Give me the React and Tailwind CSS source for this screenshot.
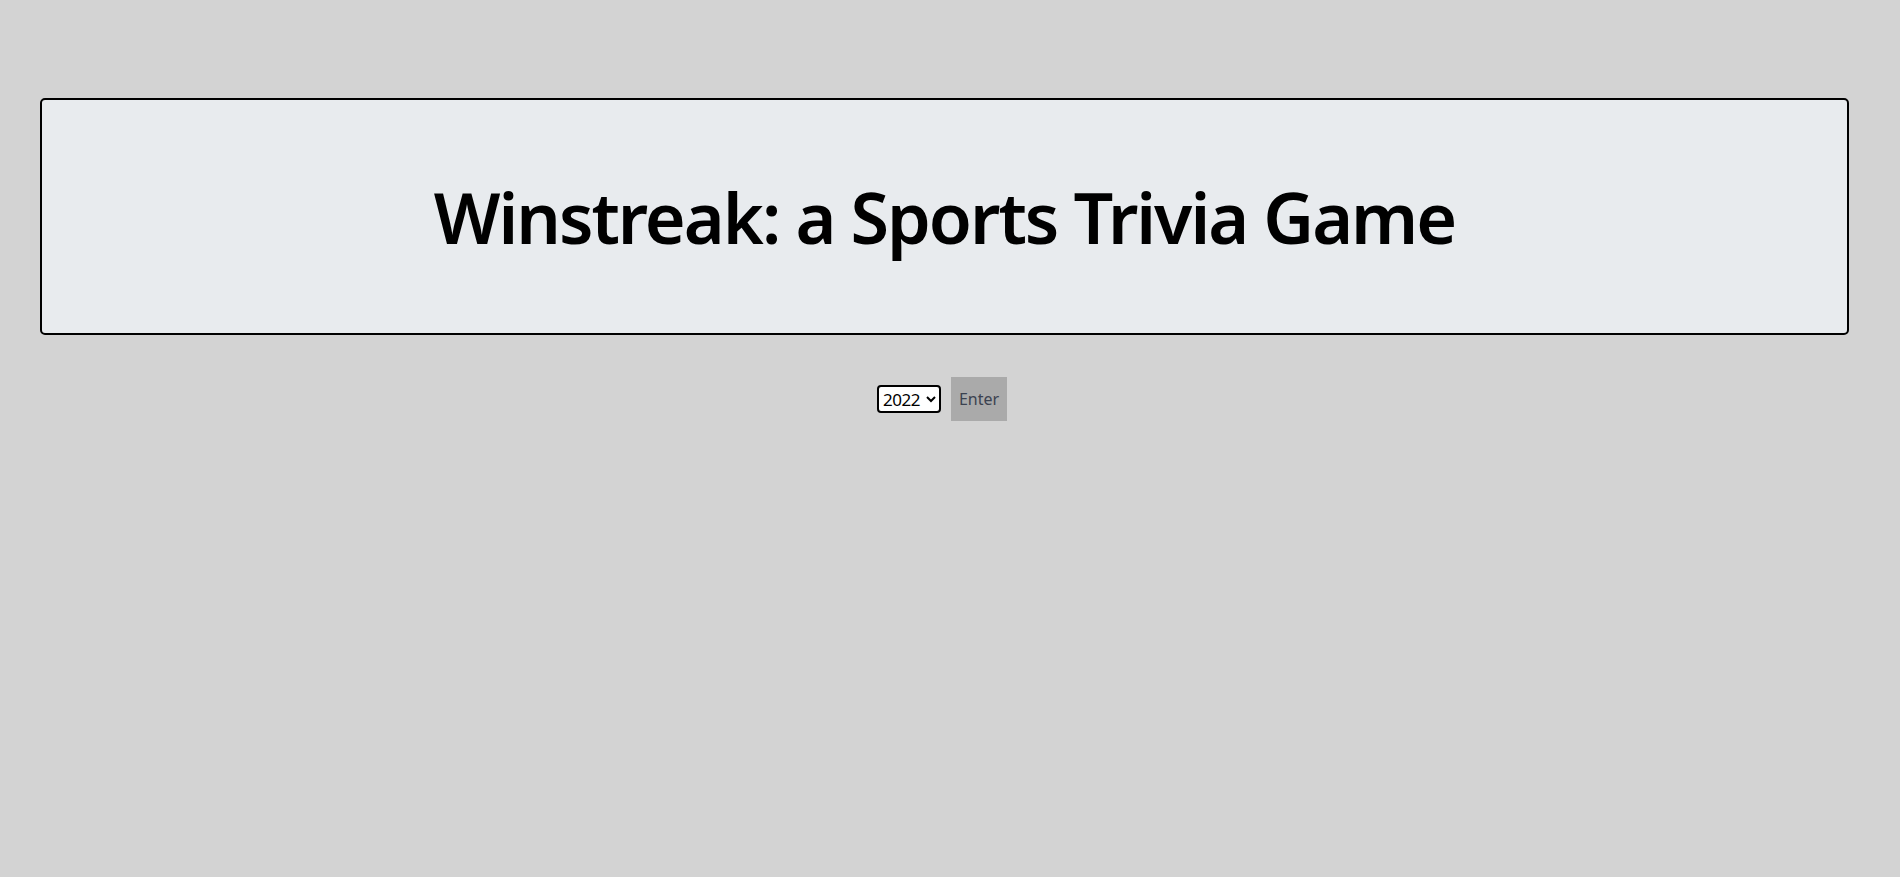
export default function App() {
  return (
    <div className="min-h-[877px] bg-[#d3d3d3] pt-[98px] font-['Noto_Sans',sans-serif]">
      <header className="ml-[40px] w-[1809px] h-[237px] border-2 border-black rounded-[5px] bg-[#e8ebee] flex items-center justify-center">
        <h1 className="text-[70px] font-semibold text-black leading-none tracking-[-2px]">
          Winstreak: a Sports Trivia Game
        </h1>
      </header>

      <div className="mt-[42px] flex items-center justify-center gap-[10px] pr-[16px]">
        <select
          defaultValue="2022"
          className="w-[64px] h-[28px] border-2 border-black rounded-[4px] bg-white text-[17px] leading-none text-black pl-0 tracking-[-0.5px]"
        >
          <option>2022</option>
          <option>2021</option>
          <option>2020</option>
        </select>
        <button className="w-[56px] h-[44px] bg-[#aaaaaa] text-[16px] text-[#3b4250]">
          Enter
        </button>
      </div>
    </div>
  )
}
